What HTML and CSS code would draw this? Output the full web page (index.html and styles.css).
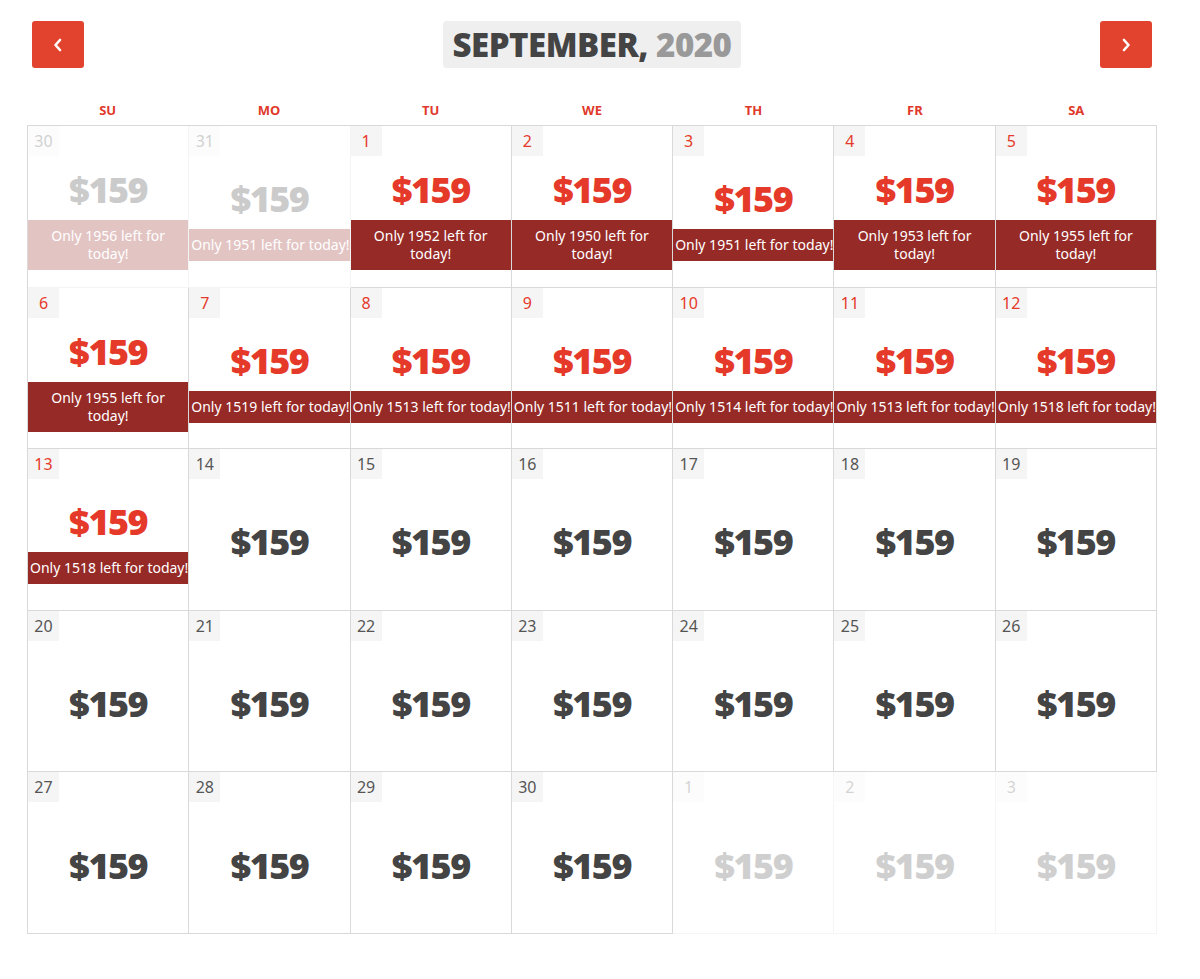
FILE: index.html
```html
<!DOCTYPE html>
<html>
<head>
<meta charset="utf-8">
<link rel="stylesheet" href="styles.css">
</head>
<body>
<div class="page">
  <div class="header">
    <button class="nav"><svg width="12" height="14" viewBox="0 0 12 14"><path d="M8 2 L3.5 7 L8 12" fill="none" stroke="#fff" stroke-width="2.6" stroke-linecap="round" stroke-linejoin="round"/></svg></button>
    <div class="title"><span class="title-text"><span class="month">SEPTEMBER,</span> <span class="year">2020</span></span></div>
    <button class="nav"><svg width="12" height="14" viewBox="0 0 12 14"><path d="M4 2 L8.5 7 L4 12" fill="none" stroke="#fff" stroke-width="2.6" stroke-linecap="round" stroke-linejoin="round"/></svg></button>
  </div>
  <div class="weekdays">
    <div>SU</div><div>MO</div><div>TU</div><div>WE</div><div>TH</div><div>FR</div><div>SA</div>
  </div>
  <div class="grid">
    <div class="cell past"><span class="num">30</span><div class="body"><div class="price">$159</div><div class="left">Only 1956 left for<br>today!</div></div></div>
    <div class="cell past"><span class="num">31</span><div class="body"><div class="price">$159</div><div class="left">Only 1951 left for today!</div></div></div>
    <div class="cell hot"><span class="num">1</span><div class="body"><div class="price">$159</div><div class="left">Only 1952 left for<br>today!</div></div></div>
    <div class="cell hot"><span class="num">2</span><div class="body"><div class="price">$159</div><div class="left">Only 1950 left for<br>today!</div></div></div>
    <div class="cell hot"><span class="num">3</span><div class="body"><div class="price">$159</div><div class="left">Only 1951 left for today!</div></div></div>
    <div class="cell hot"><span class="num">4</span><div class="body"><div class="price">$159</div><div class="left">Only 1953 left for<br>today!</div></div></div>
    <div class="cell hot"><span class="num">5</span><div class="body"><div class="price">$159</div><div class="left">Only 1955 left for<br>today!</div></div></div>

    <div class="cell hot"><span class="num">6</span><div class="body"><div class="price">$159</div><div class="left">Only 1955 left for<br>today!</div></div></div>
    <div class="cell hot"><span class="num">7</span><div class="body"><div class="price">$159</div><div class="left">Only 1519 left for today!</div></div></div>
    <div class="cell hot"><span class="num">8</span><div class="body"><div class="price">$159</div><div class="left">Only 1513 left for today!</div></div></div>
    <div class="cell hot"><span class="num">9</span><div class="body"><div class="price">$159</div><div class="left">Only 1511 left for today!</div></div></div>
    <div class="cell hot"><span class="num">10</span><div class="body"><div class="price">$159</div><div class="left">Only 1514 left for today!</div></div></div>
    <div class="cell hot"><span class="num">11</span><div class="body"><div class="price">$159</div><div class="left">Only 1513 left for today!</div></div></div>
    <div class="cell hot"><span class="num">12</span><div class="body"><div class="price">$159</div><div class="left">Only 1518 left for today!</div></div></div>

    <div class="cell hot"><span class="num">13</span><div class="body"><div class="price">$159</div><div class="left">Only 1518 left for today!</div></div></div>
    <div class="cell"><span class="num">14</span><div class="body"><div class="price">$159</div></div></div>
    <div class="cell"><span class="num">15</span><div class="body"><div class="price">$159</div></div></div>
    <div class="cell"><span class="num">16</span><div class="body"><div class="price">$159</div></div></div>
    <div class="cell"><span class="num">17</span><div class="body"><div class="price">$159</div></div></div>
    <div class="cell"><span class="num">18</span><div class="body"><div class="price">$159</div></div></div>
    <div class="cell"><span class="num">19</span><div class="body"><div class="price">$159</div></div></div>

    <div class="cell"><span class="num">20</span><div class="body"><div class="price">$159</div></div></div>
    <div class="cell"><span class="num">21</span><div class="body"><div class="price">$159</div></div></div>
    <div class="cell"><span class="num">22</span><div class="body"><div class="price">$159</div></div></div>
    <div class="cell"><span class="num">23</span><div class="body"><div class="price">$159</div></div></div>
    <div class="cell"><span class="num">24</span><div class="body"><div class="price">$159</div></div></div>
    <div class="cell"><span class="num">25</span><div class="body"><div class="price">$159</div></div></div>
    <div class="cell"><span class="num">26</span><div class="body"><div class="price">$159</div></div></div>

    <div class="cell"><span class="num">27</span><div class="body"><div class="price">$159</div></div></div>
    <div class="cell"><span class="num">28</span><div class="body"><div class="price">$159</div></div></div>
    <div class="cell"><span class="num">29</span><div class="body"><div class="price">$159</div></div></div>
    <div class="cell"><span class="num">30</span><div class="body"><div class="price">$159</div></div></div>
    <div class="cell next"><span class="num">1</span><div class="body"><div class="price">$159</div></div></div>
    <div class="cell next"><span class="num">2</span><div class="body"><div class="price">$159</div></div></div>
    <div class="cell next"><span class="num">3</span><div class="body"><div class="price">$159</div></div></div>
  </div>
</div>
</body>
</html>
```

FILE: styles.css
```css
* { box-sizing: border-box; }
body {
  margin: 0;
  background: #fff;
  font-family: "Noto Sans", "Open Sans", sans-serif;
  color: #444;
}
.page {
  width: 1130px;
  margin-left: 27px;
  padding-top: 21px;
}
.header {
  display: flex;
  justify-content: space-between;
  align-items: center;
  padding: 0 5px;
  height: 47px;
}
.nav {
  width: 52px;
  height: 47px;
  border: none;
  border-radius: 3px;
  background: #e2432f;
  display: flex;
  align-items: center;
  justify-content: center;
  padding: 0;
}
.title {
  background: #efefef;
  border-radius: 4px;
  height: 47px;
  padding: 0 10px;
  display: flex;
  align-items: center;
  font-family: "Noto Sans", sans-serif;
  font-weight: 900;
  font-size: 33px;
  letter-spacing: -0.5px;
}
.title-text { white-space: nowrap; }
.month { color: #444; }
.year { color: #999; }
.weekdays {
  display: grid;
  grid-template-columns: repeat(7, 1fr);
  margin-top: 32px;
  height: 25px;
}
.weekdays div {
  text-align: center;
  color: #e0392b;
  font-weight: 700;
  font-size: 13px;
  line-height: 20px;
}
.grid {
  display: grid;
  grid-template-columns: repeat(7, 1fr);
  grid-template-rows: repeat(5, 1fr);
  height: 809px;
  border-top: 1px solid #d9d9d9;
  border-left: 1px solid #d9d9d9;
}
.cell {
  border-right: 1px solid #d9d9d9;
  border-bottom: 1px solid #d9d9d9;
  display: flex;
  flex-direction: column;
  align-items: flex-start;
  background: #fff;
  min-width: 0;
}
.num {
  display: block;
  min-width: 31px;
  height: 30px;
  line-height: 30px;
  padding: 0 5px;
  text-align: center;
  background: #f5f5f5;
  color: #555;
  font-size: 16px;
}
.body {
  flex: 1;
  align-self: stretch;
  display: flex;
  flex-direction: column;
  justify-content: center;
}
.price {
  text-align: center;
  font-family: "Noto Sans", sans-serif;
  font-weight: 900;
  font-size: 36px;
  line-height: 40px;
  color: #444;
  letter-spacing: -1.5px;
  padding-bottom: 2px;
  margin-top: -2px;
}
.left {
  margin-top: 8px;
  background: #962a27;
  color: #fff;
  font-size: 14px;
  line-height: 18px;
  padding: 7px 2px 7px;
  text-align: center;
  white-space: nowrap;
}
.hot .num, .hot .price { color: #e53a2a; }
.past { opacity: 0.27; }
.next { opacity: 0.25; }
```
